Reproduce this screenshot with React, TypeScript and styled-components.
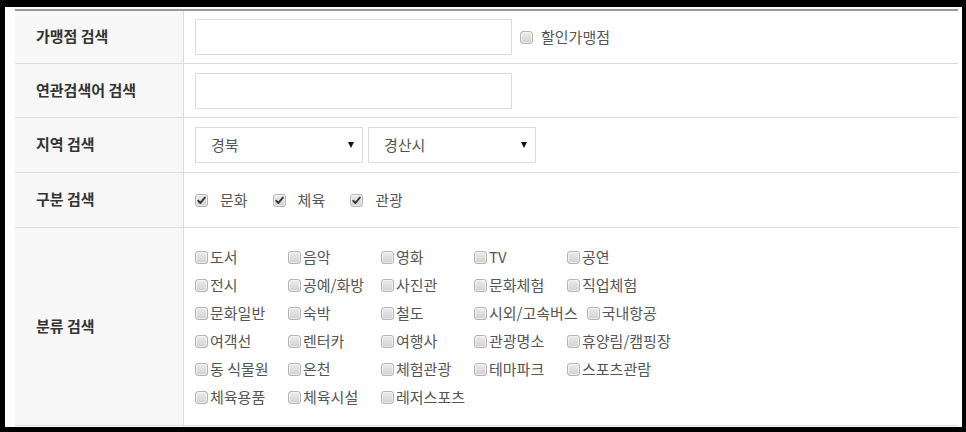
import React from 'react';
import styled, { createGlobalStyle } from 'styled-components';

const GlobalStyle = createGlobalStyle`
	html, body {
		margin: 0;
		padding: 0;
		background: #000;
	}
	body {
		font-family: 'Noto Sans CJK KR', 'Noto Sans', sans-serif;
		font-size: 15px;
		color: #555;
	}
`;

const Panel = styled.div`
	width: 957px;
	margin: 7px 0 0 5px;
	padding: 2px 4px 1px 10px;
	box-sizing: border-box;
	background: #fff;
`;

const Table = styled.div`
	width: 943px;
	border-top: 2px solid #999;
`;

const Row = styled.div<{ $height: number }>`
	display: grid;
	grid-template-columns: 169px 1fr;
	min-height: ${(p) => p.$height}px;
	border-bottom: 1px solid #dcdcdc;
`;

const Label = styled.div`
	display: flex;
	align-items: center;
	padding: 0 0 3px 21px;
	background: #f7f7f7;
	border-right: 1px solid #dcdcdc;
	font-weight: bold;
	color: #333;
	font-size: 15px;
`;

const Cell = styled.div<{ $pad?: string }>`
	display: flex;
	align-items: center;
	padding: ${(p) => p.$pad || '0 0 0 11px'};
`;

const TextInput = styled.input`
	width: 317px;
	height: 36px;
	box-sizing: border-box;
	border: 1px solid #dcdcdc;
	outline: none;
	padding: 0 10px;
	font: inherit;
	color: #555;
`;

const Box = styled.span<{ $gap: number }>`
	display: inline-flex;
	align-items: center;
	justify-content: center;
	width: 13px;
	height: 13px;
	box-sizing: border-box;
	margin-right: ${(p) => p.$gap}px;
	border: 1px solid #b4b4b4;
	border-radius: 3px;
	background: linear-gradient(#ececec, #d2d2d2);
	box-shadow: inset 0 0 0 1px rgba(255, 255, 255, 0.5);
	flex-shrink: 0;
`;

const Check: React.FC<{ checked?: boolean; gap?: number }> = ({ checked, gap = 2 }) => (
	<Box $gap={gap}>
		{checked && (
			<svg width="9" height="9" viewBox="0 0 9 9">
				<path d="M1.3 4.8 L3.4 7 L7.8 1.6" fill="none" stroke="#333" strokeWidth="1.9" strokeLinecap="round" strokeLinejoin="round" />
			</svg>
		)}
	</Box>
);

const OptionText = styled.span`
	line-height: 1;
	padding-bottom: 2px;
`;

const DiscountOption = styled.label`
	display: inline-flex;
	align-items: center;
	margin-left: 8px;
	color: #555;
`;

const Select = styled.div`
	display: flex;
	align-items: center;
	justify-content: space-between;
	width: 168px;
	height: 36px;
	box-sizing: border-box;
	margin-right: 5px;
	padding: 0 8px 0 15px;
	border: 1px solid #dcdcdc;
	color: #555;
`;

const Arrow = styled.span`
	width: 0;
	height: 0;
	border-left: 3px solid transparent;
	border-right: 3px solid transparent;
	border-top: 6px solid #111;
`;

const TypeOption = styled.label`
	display: inline-flex;
	align-items: center;
	margin-right: 25px;
	color: #555;
`;

const CategoryList = styled.div`
	display: flex;
	flex-wrap: wrap;
	width: 520px;
`;

const CategoryItem = styled.label`
	display: inline-flex;
	align-items: center;
	min-width: 84px;
	height: 28px;
	margin-right: 9px;
	color: #555;
	white-space: nowrap;
`;

const categoryRows = [
	['도서', '음악', '영화', 'TV', '공연'],
	['전시', '공예/화방', '사진관', '문화체험', '직업체험'],
	['문화일반', '숙박', '철도', '시외/고속버스', '국내항공'],
	['여객선', '렌터카', '여행사', '관광명소', '휴양림/캠핑장'],
	['동 식물원', '온천', '체험관광', '테마파크', '스포츠관람'],
	['체육용품', '체육시설', '레저스포츠'],
];

export default function App() {
	return (
		<>
			<GlobalStyle />
			<Panel>
				<Table>
					<Row $height={52}>
						<Label>가맹점 검색</Label>
						<Cell>
							<TextInput />
							<DiscountOption>
								<Check gap={8} />
								<OptionText>할인가맹점</OptionText>
							</DiscountOption>
						</Cell>
					</Row>
					<Row $height={53}>
						<Label>연관검색어 검색</Label>
						<Cell>
							<TextInput />
						</Cell>
					</Row>
					<Row $height={54}>
						<Label>지역 검색</Label>
						<Cell>
							<Select>
								<OptionText>경북</OptionText>
								<Arrow />
							</Select>
							<Select>
								<OptionText>경산시</OptionText>
								<Arrow />
							</Select>
						</Cell>
					</Row>
					<Row $height={54}>
						<Label>구분 검색</Label>
						<Cell>
							{['문화', '체육', '관광'].map((t) => (
								<TypeOption key={t}>
									<Check checked gap={12} />
									<OptionText>{t}</OptionText>
								</TypeOption>
							))}
						</Cell>
					</Row>
					<Row $height={197}>
						<Label>분류 검색</Label>
						<Cell $pad="15px 0 13px 11px">
							<CategoryList>
								{categoryRows.map((row, i) => (
									<React.Fragment key={i}>
										{row.map((t) => (
											<CategoryItem key={t}>
												<Check gap={2} />
												<OptionText>{t}</OptionText>
											</CategoryItem>
										))}
									</React.Fragment>
								))}
							</CategoryList>
						</Cell>
					</Row>
				</Table>
			</Panel>
		</>
	);
}
